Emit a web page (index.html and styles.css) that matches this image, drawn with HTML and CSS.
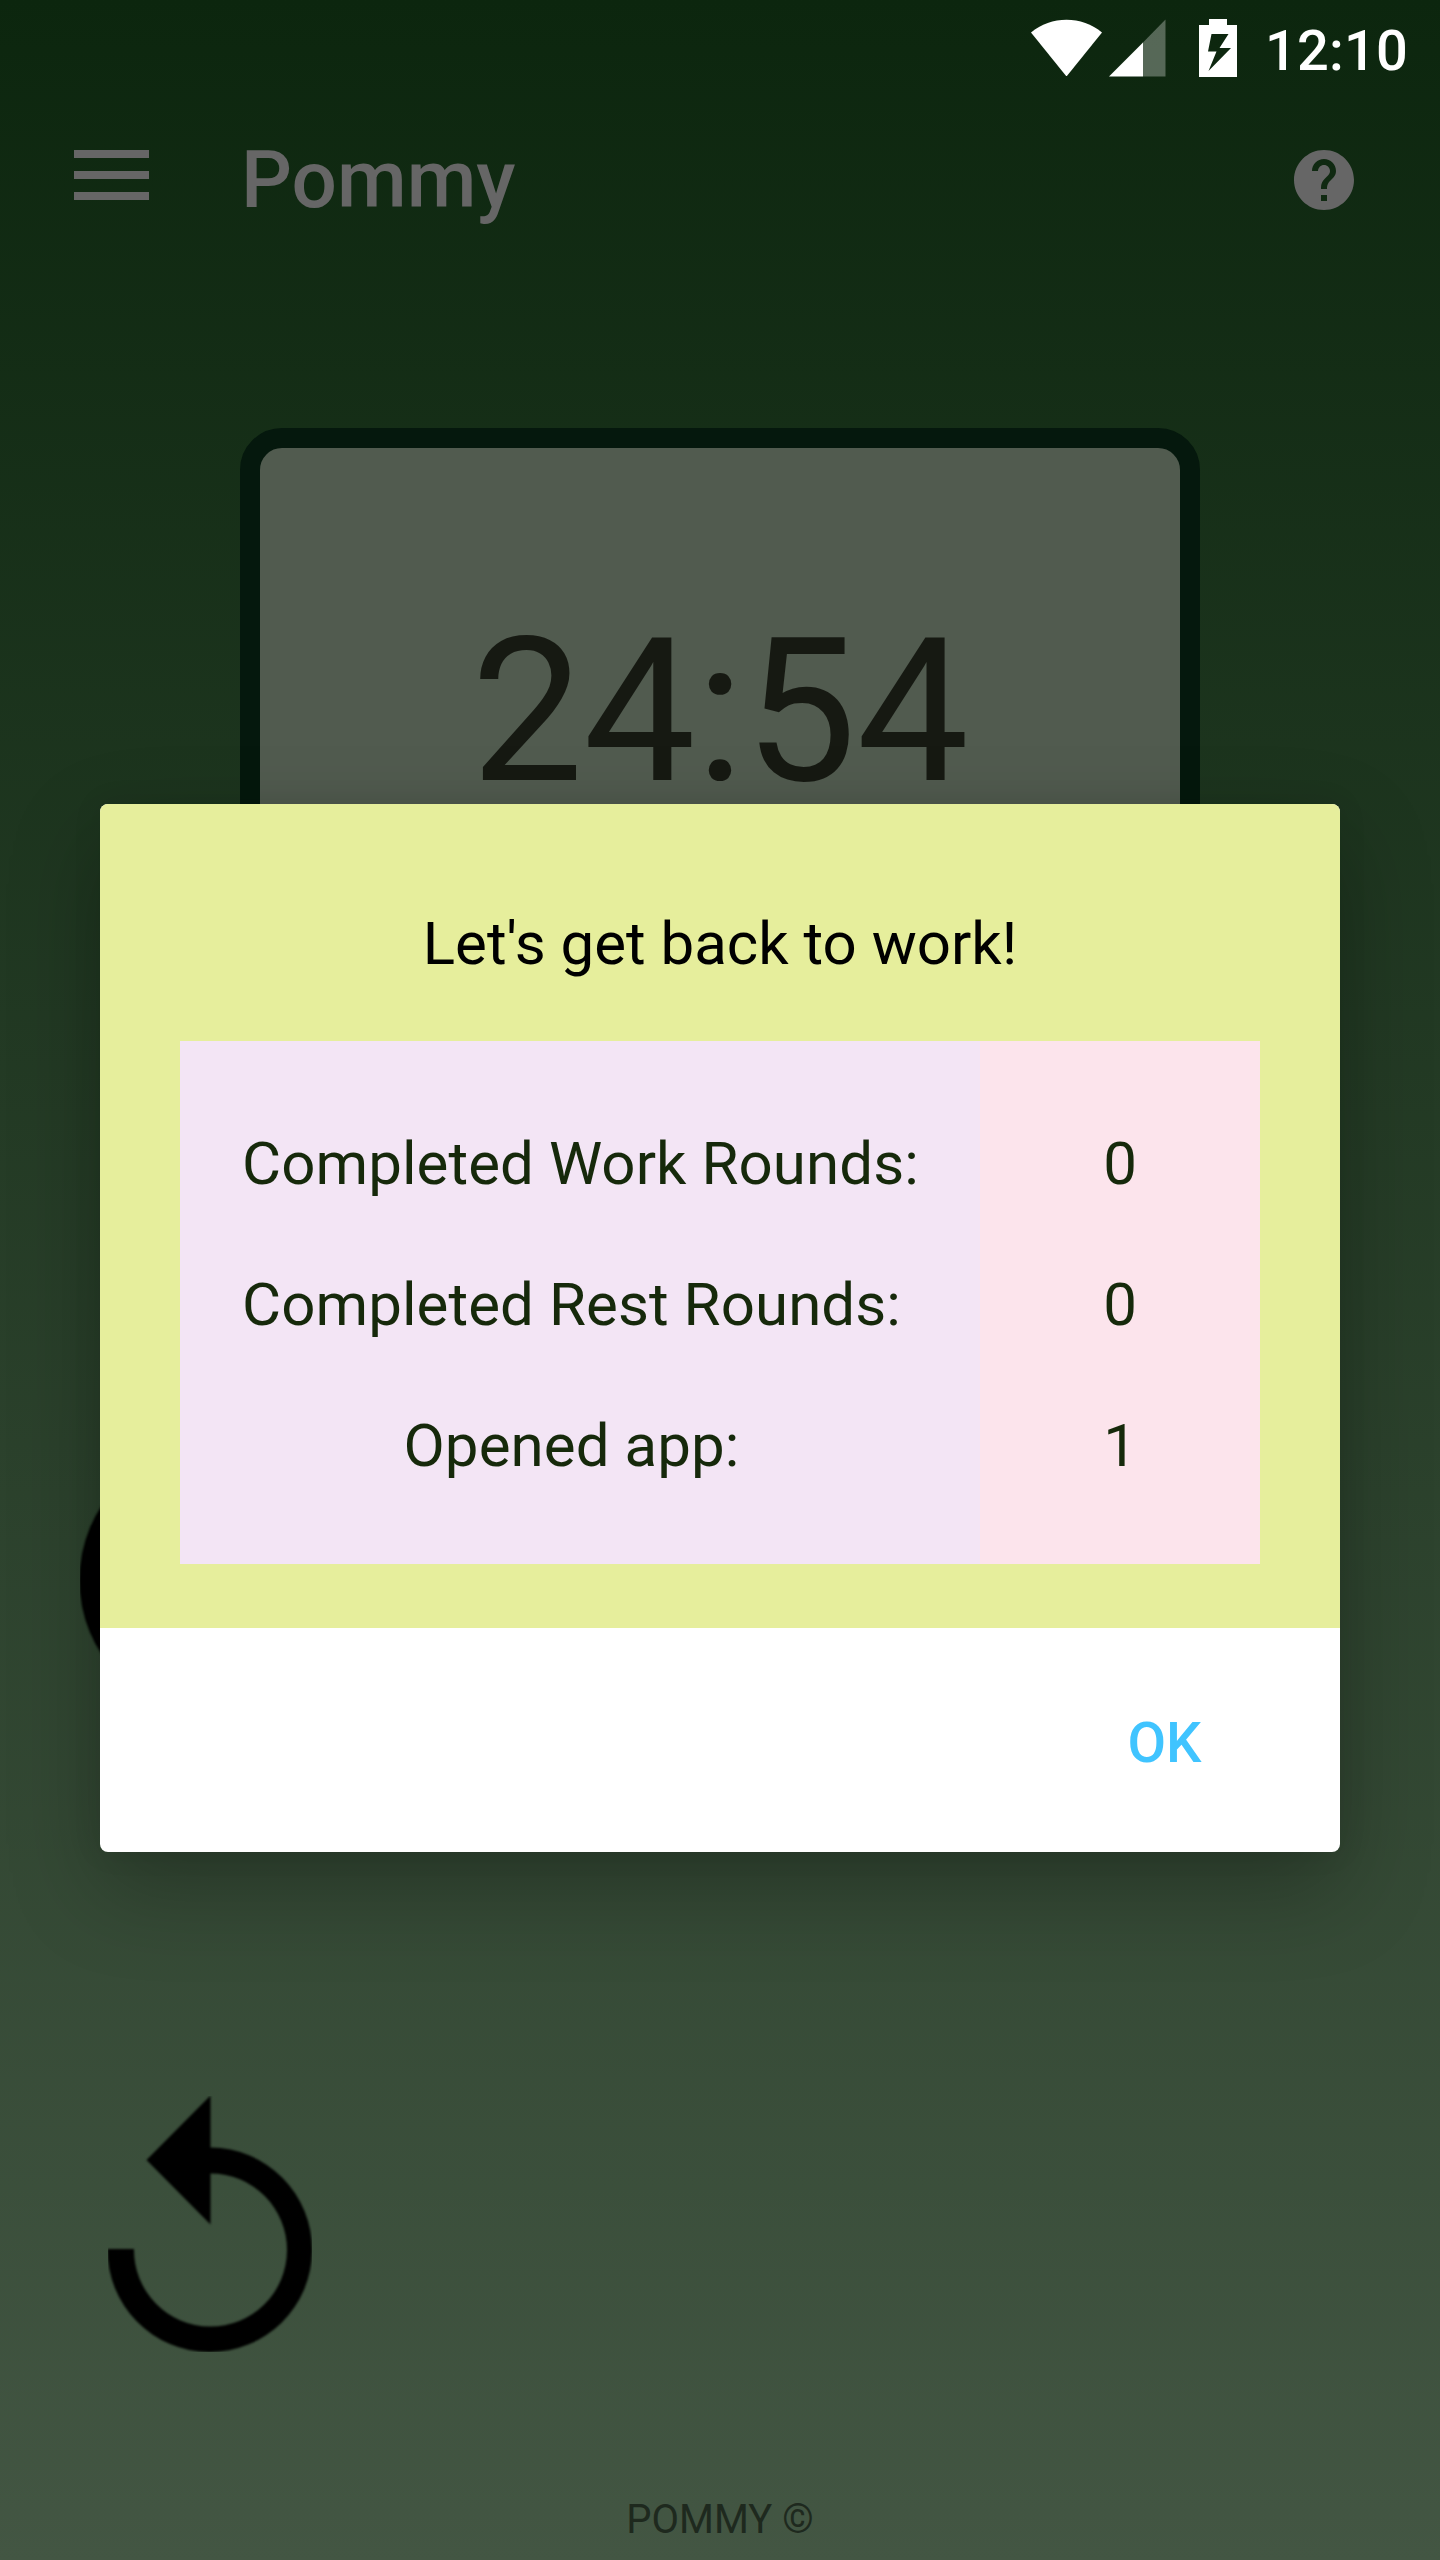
FILE: index.html
```html
<!DOCTYPE html>
<html lang="en">
<head>
<meta charset="utf-8">
<title>Pommy</title>
<link rel="stylesheet" href="styles.css">
</head>
<body>
<div class="screen">
  <div class="status">
    <svg class="wifi" width="71" height="57" viewBox="0 0 71 57"><path fill="#fff" d="M0 13.500C20-3.500 51-3.500 71 13.500L35.500 57.500Z"/></svg>
    <svg class="signal" width="57" height="58" viewBox="0 0 57 58"><path fill="#fff" fill-opacity=".3" d="M34 23.500 56.500 .5V57.500H34Z"/><path fill="#fff" d="M0 57.500H34V23.500Z"/></svg>
    <svg class="battery" width="38" height="58" viewBox="0 0 38 58"><path fill="#fff" fill-rule="evenodd" d="M0 6H10V0H28V6H38V58H0ZM12.500 15 9 32.500H17.500L9.500 52 32 29H20.500L29.500 15Z"/></svg>
    <span class="time">12:10</span>
  </div>
  <header class="appbar">
    <div class="menu"><i></i><i></i><i></i></div>
    <h1 class="title">Pommy</h1>
    <svg class="help" width="60" height="60" viewBox="2 2 20 20"><path fill="#666" d="M12 2C6.480 2 2 6.480 2 12s4.480 10 10 10 10-4.480 10-10S17.520 2 12 2zm1 17h-2v-2h2v2zm2.070-7.750l-.9.920C13.450 12.900 13 13.500 13 15h-2v-.5c0-1.100.45-2.100 1.170-2.830l1.240-1.260c.37-.36.590-.86.590-1.410 0-1.100-.9-2-2-2s-2 .9-2 2H8c0-2.210 1.790-4 4-4s4 1.790 4 4c0 .88-.36 1.680-.93 2.250z"/></svg>
  </header>
  <main class="content">
    <div class="timer">24:54</div>
    <svg class="round" width="272" height="272" viewBox="0 0 272 272"><circle class="soft" cx="136" cy="136" r="136.500"/></svg>
    <svg class="replay" width="204" height="256" viewBox="0 0 204 256"><path class="soft" d="M102.500-.5V51.500A102.300 102.300 0 1 1 -.5 153H26A76.500 76.500 0 1 0 102.500 77.500V128.500L38.500 64Z"/></svg>
  </main>
  <footer class="footer">POMMY ©</footer>
  <section class="dialog">
    <div class="body">
      <p class="message">Let's get back to work!</p>
      <div class="stats">
        <div class="labels">
          <span>Completed Work Rounds:</span>
          <div class="group"><span>Completed Rest Rounds:</span><span>Opened app:</span></div>
        </div>
        <div class="values"><span>0</span><span>0</span><span>1</span></div>
      </div>
    </div>
    <div class="actions"><span class="ok">OK</span></div>
  </section>
</div>
</body>
</html>
```
FILE: styles.css
```css
* { box-sizing: border-box; }
body { margin: 0; font-family: Roboto, sans-serif; }
.screen {
  position: relative;
  display: flex;
  flex-direction: column;
  width: 1440px;
  height: 2560px;
  overflow: hidden;
  background: linear-gradient(#0c260e, #435643);
}
.status {
  display: flex;
  height: 96px;
  padding: 19px 32px 0 1031px;
  color: #fff;
}
.signal { margin-left: 6.500px; }
.battery { margin-left: 33.500px; }
.time { margin-left: auto; font-size: 56px; line-height: 64px; font-weight: 500; letter-spacing: .2px; }
.appbar {
  display: flex;
  align-items: flex-start;
  height: 168px;
  padding: 54px 86px 0 74px;
  color: #666;
}
.menu { display: flex; flex-direction: column; gap: 13px; width: 75px; }
.menu i { height: 8px; background: #666; }
.title { flex: 1; margin: -17px 0 0 92px; font-size: 80px; line-height: 94px; font-weight: 500; }
.content { display: flex; flex-direction: column; align-items: flex-start; flex: 1; padding-top: 164px; }
.timer {
  align-self: center;
  width: 960px;
  height: 560px;
  border: 20px solid #05180d;
  border-radius: 42px;
  background: #515b4f;
  color: #161912;
  font-size: 200px;
  line-height: 234px;
  padding-top: 147px;
  text-align: center;
}
.soft { filter: blur(1.2px); }
.round { margin: 456px 0 0 80px; }
.replay { margin: 380px 0 0 108px; }
.footer { height: 80px; padding-top: 16px; text-align: center; font-size: 40px; line-height: 47px; color: #1e291e; }
.dialog {
  position: absolute;
  left: 100px;
  top: 804px;
  width: 1240px;
  height: 1048px;
  border-radius: 8px;
  overflow: hidden;
  background: #fff;
  box-shadow: 0 36px 90px rgba(0, 0, 0, .26), 0 0 30px rgba(0, 0, 0, .08);
}
.body { height: 824px; padding: 105px 80px 0; background: #e6ee9c; }
.message { margin: 0 0 62px; text-align: center; font-size: 60px; line-height: 70px; color: #000; }
.stats { display: flex; height: 523px; font-size: 60px; line-height: 71px; color: #16290b; }
.labels, .values, .group { display: flex; flex-direction: column; align-items: center; gap: 70px; }
.labels, .values { padding-top: 87px; }
.labels { align-items: flex-start; width: 800px; padding-left: 62px; background: #f3e5f5; letter-spacing: .08px; }
.values { width: 280px; background: #fce4ec; }
.actions { display: flex; justify-content: flex-end; height: 224px; padding: 82px 138.500px 0 0; }
.ok { font-size: 56px; line-height: 66px; font-weight: 500; color: #40c4ff; }
```
